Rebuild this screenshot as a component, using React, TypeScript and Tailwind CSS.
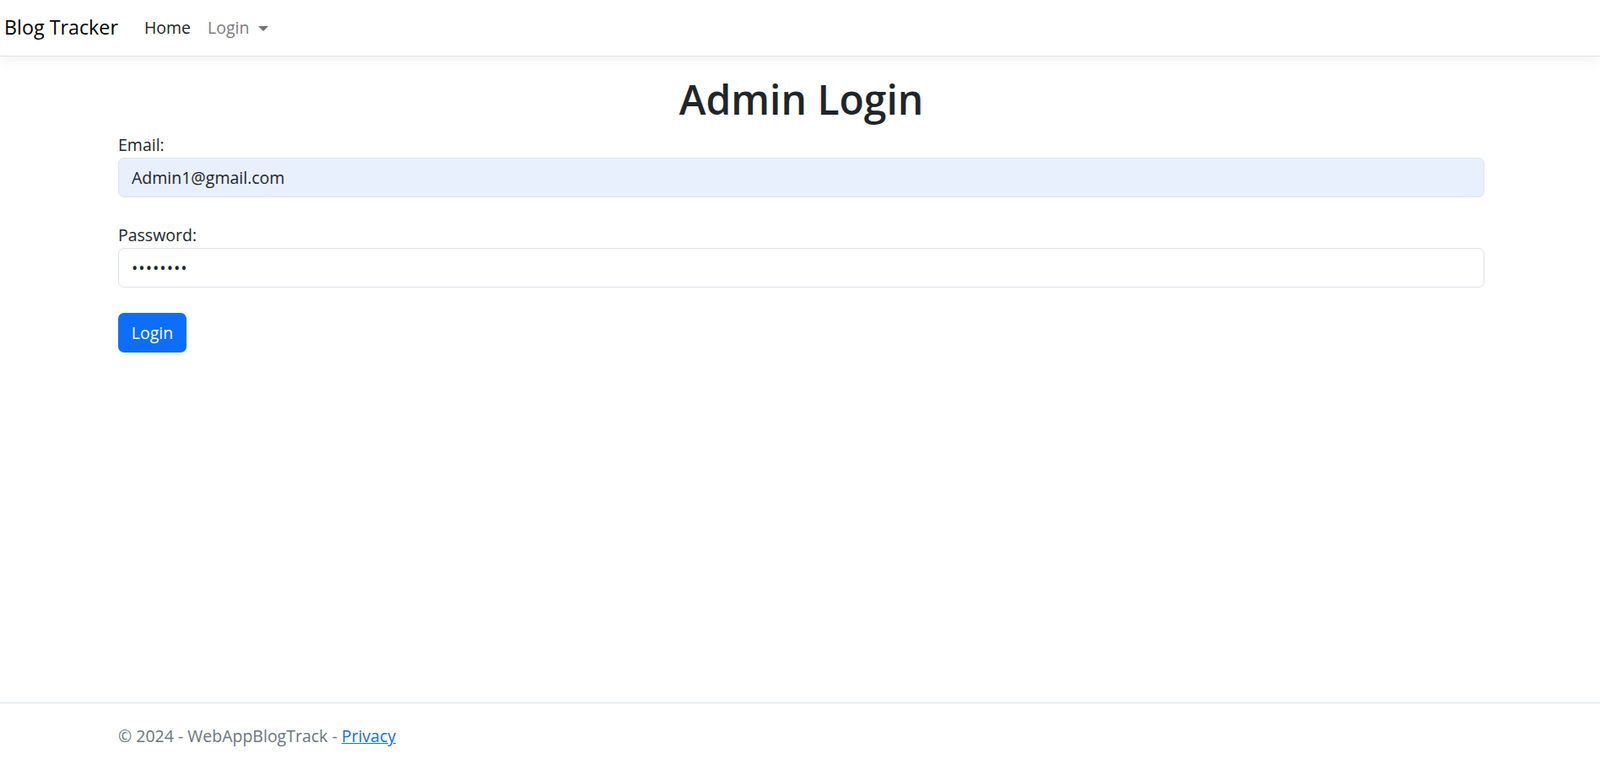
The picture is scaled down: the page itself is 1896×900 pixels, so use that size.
import React from 'react';

const font = { fontFamily: '"Segoe UI", "Open Sans", "Noto Sans", sans-serif' };

const NavBar: React.FC = () => (
  <nav className="h-[67px] flex items-center bg-white border-b border-[#dee2e6] shadow-[0_5px_15px_rgba(0,0,0,0.05)] relative z-10">
    <a className="pl-[5px] text-[23.3px] text-black leading-none mr-[31px]">Blog Tracker</a>
    <ul className="flex items-center gap-[20px] text-[19.5px]">
      <li className="text-[rgba(0,0,0,0.9)]">Home</li>
      <li className="flex items-center text-[rgba(0,0,0,0.55)]">
        Login
        <span className="ml-[11px] mt-[2px] w-0 h-0 border-l-[6px] border-r-[6px] border-t-[6px] border-l-transparent border-r-transparent border-t-[rgba(0,0,0,0.55)]" />
      </li>
    </ul>
  </nav>
);

const Field: React.FC<{ label: string; type: string; value: string; autofill?: boolean }> = ({ label, type, value, autofill }) => (
  <div>
    <label className="block leading-[30px] text-[#212529]">{label}</label>
    <input
      type={type}
      defaultValue={value}
      className={`block w-full h-[47px] px-[15px] rounded-[7px] border border-[#dee2e6] text-[19.5px] text-[#212529] outline-none ${autofill ? 'bg-[#e8f0fe]' : 'bg-white tracking-[1px]'}`}
      style={font}
    />
  </div>
);

export default function App() {
  return (
    <div className="h-[900px] flex flex-col bg-white text-[19.5px] text-[#212529]" style={font}>
      <NavBar />
      <main className="flex-1 pl-[140px] pr-[137px] pt-[21px]">
        <h1 className="text-center text-[48px] font-semibold leading-[60px] mb-[9px]">Admin Login</h1>
        <form className="flex flex-col gap-[30px]">
          <Field label="Email:" type="email" value="Admin1@gmail.com" autofill />
          <Field label="Password:" type="password" value="password" />
          <div>
            <button type="button" className="h-[47px] w-[81px] rounded-[7px] bg-[#0d6efd] text-white text-[19.5px]">Login</button>
          </div>
        </form>
      </main>
      <footer className="border-t border-[#dee2e6] h-[67px] pl-[140px] pr-[137px]">
        <div className="pt-[10px] leading-[57px] text-[#6c757d] whitespace-nowrap">
          © 2024 - WebAppBlogTrack - <a className="text-[#0d6efd] underline">Privacy</a>
        </div>
      </footer>
    </div>
  );
}
